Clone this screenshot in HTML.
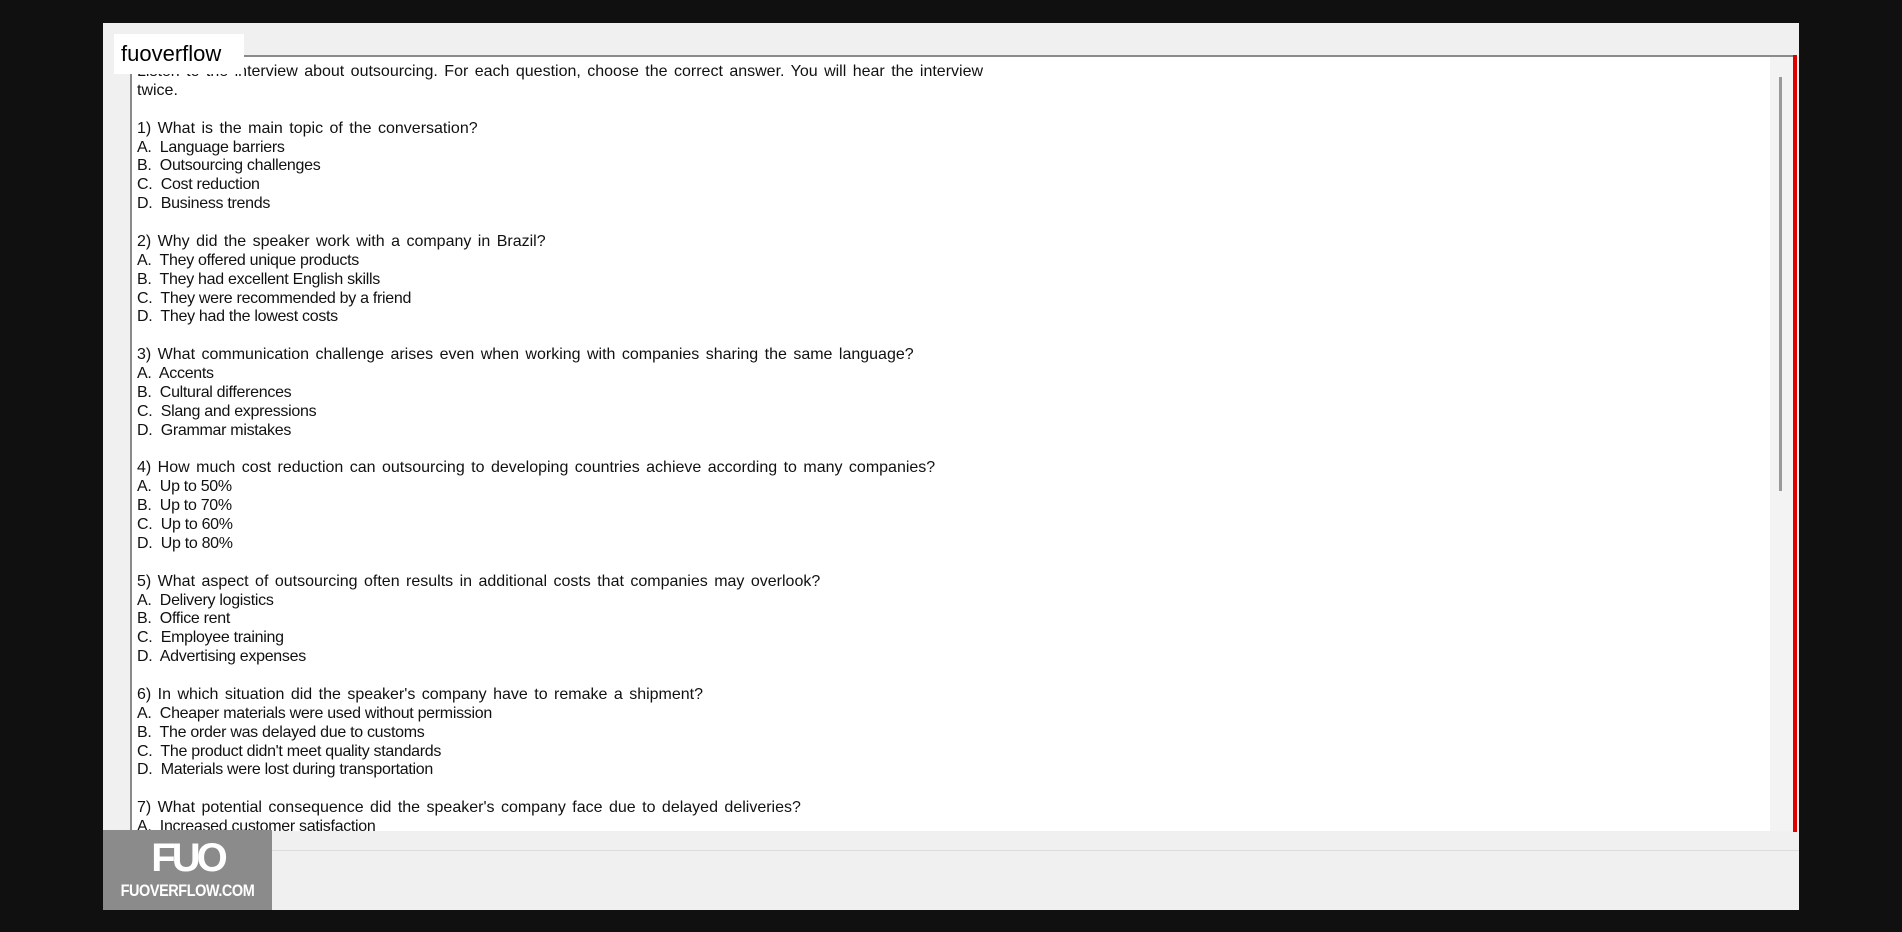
<!DOCTYPE html>
<html><head><meta charset="utf-8"><style>
html,body{margin:0;padding:0;background:#101010;width:1902px;height:932px;overflow:hidden;font-family:"Liberation Sans",Arial,sans-serif}
.panel{position:absolute;left:103px;top:23px;width:1696px;height:887px;background:#f0f0f0}
.box{position:absolute;left:130px;top:55px;width:1663px;height:776px;background:#fff;border-top:2px solid #8a8a8a;border-left:2px solid #8a8a8a;box-sizing:border-box;overflow:hidden}
.track{position:absolute;left:1770px;top:57px;width:23px;height:774px;background:#f3f3f3}
.thumb{position:absolute;left:1779px;top:77px;width:3px;height:414px;background:#9a9a9a}
.red{position:absolute;left:1793px;top:55px;width:4px;height:777px;background:#e00000}
.txt{position:absolute;left:137px;top:57px;width:1200px;height:774px;overflow:hidden;font-size:16px;line-height:18.88px;color:#111;white-space:pre;padding-top:6px;box-sizing:border-box}
.q{word-spacing:2px}
.o{letter-spacing:-0.3px}
.label{position:absolute;left:114px;top:34px;width:130px;height:40px;background:#fff;font-size:22px;line-height:40px;padding-left:7px;box-sizing:border-box;color:#000}
.sep{position:absolute;left:272px;top:850px;width:1527px;height:1px;background:#dcdcdc}
.logo{position:absolute;left:103px;top:830px;width:169px;height:80px;background:#8b8b8b;color:#fff;text-align:center}
.logo .b{font-size:40px;font-weight:bold;line-height:44px;letter-spacing:-4px;margin-top:6px}
.logo .s{font-size:17px;font-weight:bold;line-height:22px;transform:scaleX(0.85);letter-spacing:-0.5px;white-space:nowrap}
</style></head><body>
<div class="panel"></div>
<div class="box"></div>
<div class="track"></div>
<div class="thumb"></div>
<div class="red"></div>
<div class="txt"><span class="q">Listen to the interview about outsourcing. For each question, choose the correct answer. You will hear the interview</span>
twice.

<span class="q">1) What is the main topic of the conversation?</span>
<span class="o">A.  Language barriers</span>
<span class="o">B.  Outsourcing challenges</span>
<span class="o">C.  Cost reduction</span>
<span class="o">D.  Business trends</span>

<span class="q">2) Why did the speaker work with a company in Brazil?</span>
<span class="o">A.  They offered unique products</span>
<span class="o">B.  They had excellent English skills</span>
<span class="o">C.  They were recommended by a friend</span>
<span class="o">D.  They had the lowest costs</span>

<span class="q">3) What communication challenge arises even when working with companies sharing the same language?</span>
<span class="o">A.  Accents</span>
<span class="o">B.  Cultural differences</span>
<span class="o">C.  Slang and expressions</span>
<span class="o">D.  Grammar mistakes</span>

<span class="q">4) How much cost reduction can outsourcing to developing countries achieve according to many companies?</span>
<span class="o">A.  Up to 50%</span>
<span class="o">B.  Up to 70%</span>
<span class="o">C.  Up to 60%</span>
<span class="o">D.  Up to 80%</span>

<span class="q">5) What aspect of outsourcing often results in additional costs that companies may overlook?</span>
<span class="o">A.  Delivery logistics</span>
<span class="o">B.  Office rent</span>
<span class="o">C.  Employee training</span>
<span class="o">D.  Advertising expenses</span>

<span class="q">6) In which situation did the speaker's company have to remake a shipment?</span>
<span class="o">A.  Cheaper materials were used without permission</span>
<span class="o">B.  The order was delayed due to customs</span>
<span class="o">C.  The product didn't meet quality standards</span>
<span class="o">D.  Materials were lost during transportation</span>

<span class="q">7) What potential consequence did the speaker's company face due to delayed deliveries?</span>
<span class="o">A.  Increased customer satisfaction</span>
</div>
<div class="label">fuoverflow</div>
<div class="sep"></div>
<div class="logo"><div class="b">FUO</div><div class="s">FUOVERFLOW.COM</div></div>
</body></html>
